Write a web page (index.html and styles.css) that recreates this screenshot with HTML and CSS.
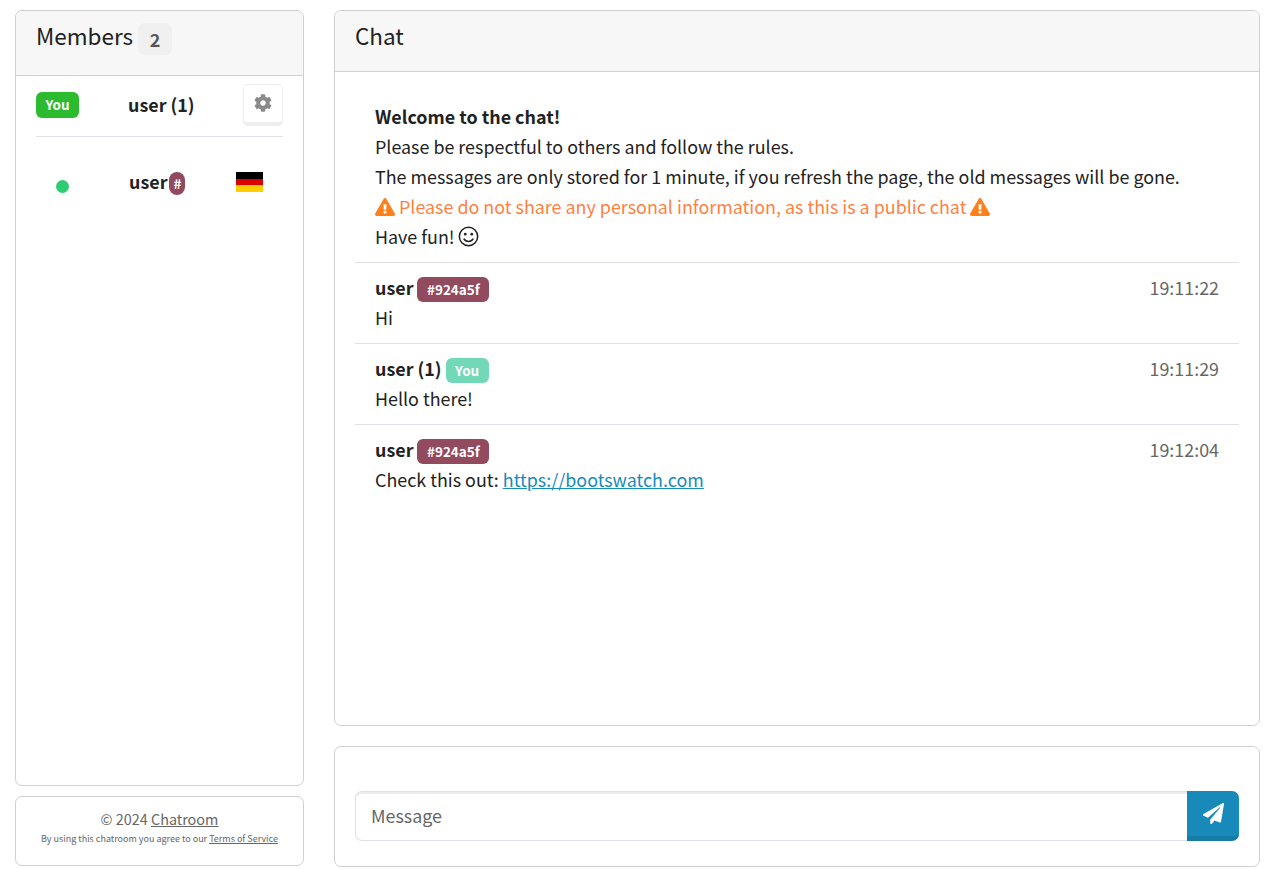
FILE: index.html
```html
<!DOCTYPE html>
<html lang="en">
<head>
  <meta charset="UTF-8" />
  <meta name="viewport" content="width=device-width, initial-scale=1" />
  <title>Chatroom</title>
  <link rel="stylesheet" href="styles.css">
</head>
<body>
  <div class="page">
    <div class="sidebar">
      <div class="card members">
        <div class="card-header members-header">
          <h4>Members</h4>
          <span class="count">2</span>
        </div>
        <div class="members-body">
          <div class="member member-self">
            <span class="badge badge-green">You</span>
            <strong class="member-name">user (1)</strong>
            <button class="settings" type="button" aria-label="Settings">
              <svg class="icon-gear" viewBox="0 0 512 512"><path d="M487.4 315.7l-42.6-24.6c4.3-23.2 4.3-47 0-70.2l42.6-24.6c4.9-2.8 7.1-8.6 5.5-14-11.1-35.6-30-67.8-54.7-94.6-3.8-4.1-10-5.1-14.8-2.3L380.8 110c-17.9-15.4-38.5-27.3-60.8-35.1V25.8c0-5.6-3.9-10.5-9.4-11.7-36.7-8.2-74.3-7.8-109.2 0-5.5 1.2-9.4 6.1-9.4 11.7V75c-22.2 7.9-42.8 19.8-60.8 35.1L88.7 85.5c-4.9-2.8-11-1.9-14.8 2.3-24.7 26.7-43.6 58.9-54.7 94.6-1.7 5.4.6 11.2 5.5 14L67.3 221c-4.3 23.2-4.3 47 0 70.2l-42.6 24.6c-4.9 2.8-7.1 8.6-5.5 14 11.1 35.6 30 67.8 54.7 94.6 3.8 4.1 10 5.1 14.8 2.3l42.6-24.6c17.9 15.4 38.5 27.3 60.8 35.1v49.2c0 5.6 3.9 10.5 9.4 11.7 36.7 8.2 74.3 7.8 109.2 0 5.5-1.2 9.4-6.1 9.4-11.7v-49.2c22.2-7.9 42.8-19.8 60.8-35.1l42.6 24.6c4.9 2.8 11 1.9 14.8-2.3 24.7-26.7 43.6-58.9 54.7-94.6 1.5-5.5-.7-11.3-5.6-14.1zM256 336c-44.1 0-80-35.9-80-80s35.9-80 80-80 80 35.9 80 80-35.9 80-80 80z"/></svg>
            </button>
          </div>
          <div class="member member-other">
            <span class="status-dot"></span>
            <span class="member-id">
              <strong class="member-name">user</strong>
              <span class="badge badge-plum badge-short">#</span>
            </span>
            <span class="flag"><i class="flag-black"></i><i class="flag-red"></i><i class="flag-gold"></i></span>
          </div>
        </div>
      </div>
      <div class="card footer">
        <div class="footer-main">© 2024 <a href="#">Chatroom</a></div>
        <div class="footer-small">By using this chatroom you agree to our <a href="#">Terms of Service</a></div>
      </div>
    </div>

    <div class="main">
      <div class="card chat">
        <div class="card-header chat-header"><h4>Chat</h4></div>
        <div class="chat-body">
          <div class="message welcome">
            <strong>Welcome to the chat!</strong><br>
            Please be respectful to others and follow the rules.<br>
            The messages are only stored for 1 minute, if you refresh the page, the old messages will be gone.<br>
            <span class="warning">
              <svg class="icon-warn" viewBox="0 0 576 512"><path d="M569.517 440.013C587.975 472.007 564.806 512 527.94 512H48.054c-36.937 0-59.999-40.055-41.577-71.987L246.423 23.985c18.467-32.009 64.72-31.951 83.154 0l239.94 416.028zM288 354c-25.405 0-46 20.595-46 46s20.595 46 46 46 46-20.595 46-46-20.595-46-46-46zm-43.673-165.346l7.418 136c.347 6.364 5.609 11.346 11.982 11.346h48.546c6.373 0 11.635-4.982 11.982-11.346l7.418-136c.375-6.874-5.098-12.654-11.982-12.654h-63.383c-6.884 0-12.356 5.78-11.981 12.654z"/></svg>
              Please do not share any personal information, as this is a public chat
              <svg class="icon-warn" viewBox="0 0 576 512"><path d="M569.517 440.013C587.975 472.007 564.806 512 527.94 512H48.054c-36.937 0-59.999-40.055-41.577-71.987L246.423 23.985c18.467-32.009 64.72-31.951 83.154 0l239.94 416.028zM288 354c-25.405 0-46 20.595-46 46s20.595 46 46 46 46-20.595 46-46-20.595-46-46-46zm-43.673-165.346l7.418 136c.347 6.364 5.609 11.346 11.982 11.346h48.546c6.373 0 11.635-4.982 11.982-11.346l7.418-136c.375-6.874-5.098-12.654-11.982-12.654h-63.383c-6.884 0-12.356 5.78-11.981 12.654z"/></svg>
            </span><br>
            Have fun!
            <svg class="icon-smile" viewBox="0 0 22 22"><circle cx="11" cy="11" r="9.6"/><circle class="eye" cx="7.6" cy="8.6" r="1.4"/><circle class="eye" cx="14.4" cy="8.6" r="1.4"/><path d="M6 13.2c1.2 2 3 3 5 3s3.8-1 5-3"/></svg>
          </div>

          <div class="message">
            <div class="message-head">
              <div><strong>user</strong> <span class="badge badge-plum">#924a5f</span></div>
              <span class="time">19:11:22</span>
            </div>
            <div>Hi</div>
          </div>

          <div class="message">
            <div class="message-head">
              <div><strong>user (1)</strong> <span class="badge badge-mint">You</span></div>
              <span class="time">19:11:29</span>
            </div>
            <div>Hello there!</div>
          </div>

          <div class="message">
            <div class="message-head">
              <div><strong>user</strong> <span class="badge badge-plum">#924a5f</span></div>
              <span class="time">19:12:04</span>
            </div>
            <div>Check this out: <a class="link" href="#">https://bootswatch.com</a></div>
          </div>
        </div>
      </div>

      <div class="card composer">
        <form class="composer-form">
          <input type="text" placeholder="Message" />
          <button type="button" aria-label="Send">
            <svg class="icon-send" viewBox="0 0 512 512"><path d="M476 3.2L12.5 270.6c-18.1 10.4-15.8 35.6 2.2 43.2L121 358.4l287.3-253.2c5.5-4.9 13.3 2.6 8.6 8.3L176 407v80.5c0 23.6 28.5 32.9 42.5 15.8L282 426l124.6 52.2c14.2 6 30.4-2.9 33-18.2l72-432C515 7.8 493.3-6.8 476 3.2z"/></svg>
          </button>
        </form>
      </div>
    </div>
  </div>
</body>
</html>
```

FILE: styles.css
```css
* {
  box-sizing: border-box;
}
html, body {
  height: 100%;
}
body {
  margin: 0;
  font-family: "Noto Sans CJK JP", "Noto Sans", sans-serif;
  font-size: 17.9px;
  line-height: 30px;
  color: #222;
  background: #fff;
  overflow: hidden;
}
a {
  color: inherit;
}
h4 {
  margin: 0;
  font-size: 22.5px;
  font-weight: 400;
  line-height: 30px;
}
strong {
  font-weight: 700;
}
.page {
  display: flex;
  gap: 30px;
  height: 869px;
  padding: 10px 15px 2px;
}
.sidebar {
  width: 289px;
  flex: none;
  display: flex;
  flex-direction: column;
  gap: 10px;
  padding-bottom: 1px;
}
.main {
  flex: 1;
  min-width: 0;
  display: flex;
  flex-direction: column;
  gap: 20px;
}
.card {
  border: 1px solid #d0d0d0;
  border-radius: 7px;
  background: #fff;
}
.card-header {
  background: #f7f7f7;
  border-bottom: 1px solid #d0d0d0;
  border-radius: 6px 6px 0 0;
  padding: 9px 20px;
}

/* members */
.members {
  flex: 1;
}
.members-header {
  display: flex;
  align-items: flex-start;
  gap: 5px;
  height: 65px;
}
.count {
  width: 34px;
  height: 32px;
  margin-top: 3px;
  background: #f0f0f0;
  border-radius: 7px;
  color: #555;
  font-size: 18px;
  font-weight: 700;
  line-height: 32px;
  text-align: center;
}
.members-body {
  padding: 8px 20px;
}
.member {
  display: grid;
  grid-template-columns: 92px 1fr 40px;
  align-items: center;
}
.member-self {
  height: 53px;
  padding-bottom: 11px;
  border-bottom: 1px solid #e0e0e6;
}
.member-self .member-name {
  margin-bottom: 2px;
}
.member-other {
  margin-top: 29px;
  height: 24px;
}
.member-id {
  display: flex;
  align-items: center;
  gap: 2px;
  margin-left: 1px;
}
.member-id .member-name {
  margin-bottom: 2px;
}
.settings {
  width: 40px;
  height: 42px;
  padding: 0 0 2px;
  border: 1px solid #eee;
  border-bottom-width: 4px;
  border-radius: 5px;
  background: #fff;
  display: flex;
  align-items: center;
  justify-content: center;
}
.icon-gear {
  width: 18px;
  height: 18px;
  fill: #8a8a8a;
}
.badge {
  display: inline-block;
  height: 25px;
  padding: 0 9.5px;
  border-radius: 6px;
  color: #fff;
  font-size: 13.5px;
  font-weight: 700;
  line-height: 25px;
  text-align: center;
  white-space: nowrap;
}
.badge-green {
  background: #2cba2e;
  width: 43px;
  height: 26px;
  padding: 0;
}
.badge-plum {
  background: #924a5f;
}
.badge-mint {
  background: #72d8b8;
}
.badge-short {
  width: 16px;
  height: 23px;
  margin-top: 3px;
  padding: 0;
  line-height: 23px;
  border-radius: 8px;
}
.status-dot {
  width: 13px;
  height: 13px;
  margin: 8px 0 0 20px;
  border-radius: 50%;
  background: #2ecc71;
}
.flag {
  width: 27px;
  height: 20px;
  margin-left: -7px;
  display: flex;
  flex-direction: column;
}
.flag i {
  flex: 1;
}
.flag-black { background: #000; }
.flag-red { background: #d00; }
.flag-gold { background: #ffce00; }

/* footer */
.footer {
  height: 70px;
  flex: none;
  padding-top: 11px;
  text-align: center;
  color: #666;
}
.footer-main {
  font-size: 14.4px;
  line-height: 22px;
}
.footer-small {
  margin-top: 1px;
  font-size: 9px;
  line-height: 16px;
}

/* chat */
.chat {
  flex: 1;
  min-height: 0;
}
.chat-header {
  height: 61px;
}
.chat-body {
  padding: 29px 20px 0;
}
.message {
  height: 81px;
  padding: 12px 20px 0;
  border-top: 1px solid #e0e0e6;
}
.welcome {
  height: auto;
  border-top: 0;
  padding-top: 0;
  padding-bottom: 11px;
}
.message-head {
  display: flex;
  justify-content: space-between;
  height: 27px;
  line-height: 25px;
}
.time {
  color: #666;
  line-height: 25px;
}
.warning {
  color: #ff7f3f;
}
.icon-warn {
  width: 20px;
  height: 18px;
  fill: #ff7f1b;
  vertical-align: -2px;
}
.icon-smile {
  width: 21px;
  height: 21px;
  margin-left: -1px;
  fill: none;
  stroke: #222;
  stroke-width: 1.6;
  vertical-align: -3px;
}
.icon-smile .eye {
  fill: #222;
  stroke: none;
}
.link {
  color: #158cba;
}

/* composer */
.composer {
  height: 121px;
  flex: none;
  padding: 44px 20px 0;
}
.composer-form {
  display: flex;
}
.composer-form input {
  flex: 1;
  min-width: 0;
  height: 50px;
  padding: 0 15px 2px;
  border: 1px solid #e0e0e6;
  border-right: 0;
  border-radius: 7px 0 0 7px;
  box-shadow: inset 0 2px 0 rgba(0, 0, 0, 0.075);
  font: inherit;
  color: #222;
}
.composer-form input::placeholder {
  color: #666;
  opacity: 1;
}
.composer-form button {
  width: 52px;
  height: 50px;
  padding: 0;
  border: 0;
  border-bottom: 5px solid #147ca5;
  border-radius: 0 7px 7px 0;
  background: #178ab9;
  display: flex;
  align-items: center;
  justify-content: center;
}
.icon-send {
  width: 21px;
  height: 21px;
  fill: #fff;
}
```
